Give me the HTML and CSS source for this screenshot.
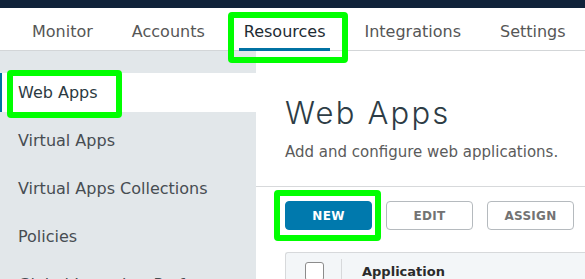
FILE: index.html
```html
<!DOCTYPE html>
<html lang="en">
<head>
    <meta charset="UTF-8">
    <meta name="viewport" content="width=device-width, initial-scale=1.0">
    <title>Web Apps</title>
    <link rel="stylesheet" href="styles.css">
</head>
<body>

<div class="topbar"></div>

<nav class="tabs">
    <a class="tab">Monitor</a>
    <a class="tab">Accounts</a>
    <a class="tab active">Resources<span class="mark mark-tab"></span></a>
    <a class="tab">Integrations</a>
    <a class="tab">Settings</a>
</nav>

<div class="page">
    <aside class="sidebar">
        <a class="side-item active"><span class="side-label">Web Apps<span class="mark mark-side"></span></span></a>
        <a class="side-item">Virtual Apps</a>
        <a class="side-item">Virtual Apps Collections</a>
        <a class="side-item">Policies</a>
        <a class="side-item">Global Launcher Preferences</a>
    </aside>

    <main class="content">
        <div class="intro">
            <h1>Web Apps</h1>
            <p>Add and configure web applications.</p>
        </div>

        <div class="toolbar">
            <button class="btn btn-primary">NEW<span class="mark mark-btn"></span></button>
            <button class="btn">EDIT</button>
            <button class="btn">ASSIGN</button>
        </div>

        <div class="grid">
            <div class="grid-head">
                <div class="cell-check"><span class="checkbox"></span></div>
                <div class="cell-name">Application</div>
            </div>
        </div>
    </main>
</div>

</body>
</html>
```

FILE: styles.css
```css
body {
    margin: 0;
    font-family: "DejaVu Sans", Inter, sans-serif;
    background: #fff;
    color: #454545;
    overflow: hidden;
    height: 279px;
}
.topbar {
    height: 8px;
    background: #10233a;
}
.tabs {
    display: flex;
    height: 43px;
    padding-left: 27px;
    gap: 29px;
    box-shadow: inset 0 -1px 0 #d3d6d8;
}
.tab {
    position: relative;
    display: flex;
    align-items: center;
    padding: 3px 5px 0;
    font-size: 16px;
    color: #565656;
}
.tab.active {
    color: #1d2b33;
    box-shadow: inset 0 -3px 0 #0072a3;
}
/* green annotation boxes */
.mark {
    position: absolute;
    border: 6px solid #00ff00;
    border-radius: 4px;
    pointer-events: none;
}
.mark-tab {
    left: -11px;
    right: -18px;
    top: 4px;
    bottom: -12px;
}
.mark-side {
    left: -11px;
    right: -24px;
    top: -13px;
    bottom: -15px;
}
.mark-btn {
    left: -12px;
    right: -10px;
    top: -12px;
    bottom: -12px;
}
.page {
    display: flex;
    height: 228px;
}
.sidebar {
    width: 256px;
    flex-shrink: 0;
    background: #e2e7ea;
    padding-top: 22px;
    box-sizing: border-box;
}
.side-item {
    display: block;
    height: 39px;
    line-height: 39px;
    margin-bottom: 9px;
    padding-left: 18px;
    font-size: 16px;
    color: #474d52;
    white-space: nowrap;
}
.side-item.active {
    background: #fff;
    color: #2b3a42;
    box-shadow: inset 2px 0 0 #0072a3;
}
.side-label {
    position: relative;
    display: inline-block;
    line-height: 20px;
}
.content {
    flex: 1;
}
.intro {
    padding: 44px 0 0 29px;
    height: 91px;
    border-bottom: 1px solid #d7d9db;
}
h1 {
    margin: 0;
    font-family: Inter, sans-serif;
    font-size: 31px;
    font-weight: 300;
    letter-spacing: 2.2px;
    line-height: 36px;
    color: #2d3c45;
}
p {
    margin: 12px 0 0;
    font-size: 15px;
    color: #5b5b5b;
}
.toolbar {
    display: flex;
    gap: 14px;
    padding: 14px 0 0 29px;
}
.btn {
    position: relative;
    width: 87px;
    height: 29px;
    border: 1px solid #b5babe;
    border-radius: 4px;
    background: #fff;
    color: #737373;
    font-family: inherit;
    font-size: 12px;
    font-weight: 700;
    letter-spacing: 0.3px;
    padding: 0;
}
.btn-primary {
    background: #0079ad;
    border-color: #0079ad;
    color: #fff;
}
.grid {
    margin: 22px 0 0 29px;
    border: 1px solid #d7d9db;
    border-right: none;
    border-radius: 3px 0 0 0;
    background: #f3f6f8;
    height: 40px;
}
.grid-head {
    display: flex;
    height: 100%;
}
.cell-check {
    width: 56px;
    padding: 9px 0 0 19px;
    box-sizing: border-box;
    border-right: 1px solid #d7d9db;
    margin-top: 6px;
    padding-top: 3px;
}
.checkbox {
    display: block;
    width: 17px;
    height: 17px;
    border: 1px solid #8c8c8c;
    border-radius: 3px;
    background: #fff;
}
.cell-name {
    padding: 11px 0 0 20px;
    font-size: 13px;
    font-weight: 700;
    color: #2b2b2b;
}
```
